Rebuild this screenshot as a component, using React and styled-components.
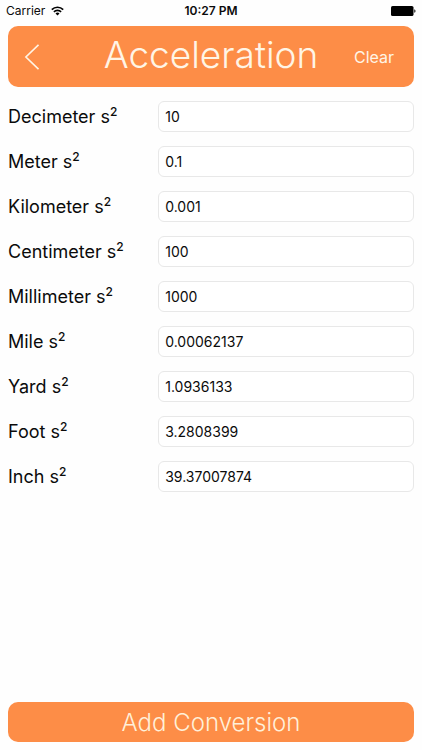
import React, { useState } from "react";
import styled, { createGlobalStyle } from "styled-components";

const GlobalStyle = createGlobalStyle`
  * { box-sizing: border-box; }
  body {
    margin: 0;
    background: #fefefe;
    color: #0b0b0b;
    font-family: Inter, "Liberation Sans", sans-serif;
  }
  button, input { font-family: inherit; }
`;

const Screen = styled.div`
  min-height: 100vh;
  display: flex;
  flex-direction: column;
  padding: 0 8px 8px;
`;

const StatusBar = styled.div`
  height: 26px;
  padding-bottom: 4px;
  display: grid;
  grid-template-columns: 1fr auto 1fr;
  align-items: center;
  font-size: 12px;
  line-height: 16px;
  margin: 0 -2px;
`;

const Carrier = styled.div`
  display: flex;
  align-items: center;
  gap: 6px;
`;

const Clock = styled.time`
  font-weight: 600;
`;

const Battery = styled.svg`
  justify-self: end;
`;

const Header = styled.header`
  height: 61px;
  display: grid;
  grid-template-columns: 72px 1fr 72px;
  align-items: center;
  border-radius: 10px;
  background: #fd8d47;
  color: #fff5e6;
`;

const HeaderButton = styled.button`
  height: 100%;
  display: flex;
  align-items: center;
  justify-content: ${(p) => (p.$side === "left" ? "flex-start" : "flex-end")};
  padding: 0 ${(p) => (p.$side === "left" ? "16px" : "20px")};
  border: 0;
  background: none;
  color: inherit;
  font-size: 16px;
  font-weight: 400;
  cursor: pointer;
`;

const Title = styled.h1`
  margin: 0;
  padding-bottom: 4px;
  text-align: center;
  font-size: 37px;
  line-height: 44px;
  font-weight: 300;
`;

const Form = styled.form`
  flex: 1;
  display: flex;
  flex-direction: column;
  gap: 14px;
  padding: 14px 0;
`;

const Row = styled.div`
  display: grid;
  grid-template-columns: 37fr 63fr;
  align-items: center;
`;

const Label = styled.label`
  font-size: 18px;
  line-height: 24px;
  white-space: nowrap;
`;

const Exponent = styled.sup`
  font-size: 12px;
  line-height: 0;
  font-weight: 500;
`;

const Field = styled.input`
  width: 100%;
  height: 31px;
  padding: 0 6px;
  border: 1px solid #e8e8e8;
  border-radius: 6px;
  background: #fff;
  color: inherit;
  font-size: 14px;
`;

const AddButton = styled.button`
  height: 40px;
  border: 0;
  border-radius: 10px;
  background: #fd8d47;
  color: #fff0d9;
  font-size: 24px;
  font-weight: 300;
  cursor: pointer;
`;

const units = [
  ["Decimeter", "10"],
  ["Meter", "0.1"],
  ["Kilometer", "0.001"],
  ["Centimeter", "100"],
  ["Millimeter", "1000"],
  ["Mile", "0.00062137"],
  ["Yard", "1.0936133"],
  ["Foot", "3.2808399"],
  ["Inch", "39.37007874"],
];

export default function App() {
  const [values, setValues] = useState(units.map(([, value]) => value));

  const change = (index, value) =>
    setValues(values.map((v, i) => (i === index ? value : v)));

  return (
    <Screen>
      <GlobalStyle />
      <StatusBar>
        <Carrier>
          Carrier
          <svg width="13" height="10" viewBox="0 0 13 10" fill="none" stroke="#000" strokeWidth="1.7" aria-label="Wi-Fi">
            <path d="M.8 3.6a8.1 8.1 0 0 1 11.4 0M2.9 5.8a5.1 5.1 0 0 1 7.2 0" />
            <path d="M4.5 7.4a2.9 2.9 0 0 1 4 0L6.5 9.5z" fill="#000" stroke="none" />
          </svg>
        </Carrier>
        <Clock>10:27 PM</Clock>
        <Battery width="25" height="10" viewBox="0 0 25 10" aria-label="Battery full">
          <rect x="0" y="0" width="22.5" height="10" rx="1.6" />
          <path d="M23.3 3.2c1.6.5 1.6 3.1 0 3.6z" />
        </Battery>
      </StatusBar>
      <Header>
        <HeaderButton type="button" $side="left" aria-label="Back">
          <svg width="15" height="26" viewBox="0 0 15 26" fill="none" stroke="currentColor" strokeWidth="1.6">
            <path d="M14.5.8 1.9 13l12.6 12.2" />
          </svg>
        </HeaderButton>
        <Title>Acceleration</Title>
        <HeaderButton type="button" $side="right" onClick={() => setValues(units.map(() => ""))}>
          Clear
        </HeaderButton>
      </Header>
      <Form>
        {units.map(([name], i) => (
          <Row key={name}>
            <Label htmlFor={name}>
              {name} s<Exponent>2</Exponent>
            </Label>
            <Field
              id={name}
              inputMode="decimal"
              value={values[i]}
              onChange={(e) => change(i, e.target.value)}
            />
          </Row>
        ))}
      </Form>
      <AddButton type="button">Add Conversion</AddButton>
    </Screen>
  );
}
